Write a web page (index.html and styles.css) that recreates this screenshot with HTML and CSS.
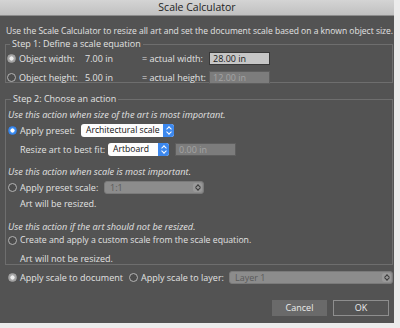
FILE: index.html
```html
<!DOCTYPE html>
<html lang="en">
<head>
    <meta charset="UTF-8">
    <title>Scale Calculator</title>
    <link rel="stylesheet" href="styles.css">
</head>
<body>
<div class="window">
    <div class="titlebar">Scale Calculator</div>
    <div class="content">
        <p class="intro">Use the Scale Calculator to resize all art and set the document scale based on a known object size.</p>

        <fieldset class="group step1">
            <legend>Step 1: Define a scale equation</legend>
            <div class="row">
                <span class="radio checked-gray"></span>
                <span class="lbl w-obj">Object width:</span>
                <span class="lbl w-val">7.00 in</span>
                <span class="lbl w-eq">= actual width:</span>
                <span class="field">28.00 in</span>
            </div>
            <div class="row">
                <span class="radio"></span>
                <span class="lbl w-obj">Object height:</span>
                <span class="lbl w-val">5.00 in</span>
                <span class="lbl w-eq">= actual height:</span>
                <span class="field disabled">12.00 in</span>
            </div>
        </fieldset>

        <fieldset class="group step2">
            <legend>Step 2: Choose an action</legend>
            <p class="hint first">Use this action when size of the art is most important.</p>
            <div class="row">
                <span class="radio checked-blue"></span>
                <span class="lbl w-preset">Apply preset:</span>
                <span class="select active w-arch">Architectural scale<span class="stepper"></span></span>
            </div>
            <div class="row indent">
                <span class="lbl w-fit">Resize art to best fit:</span>
                <span class="select active w-art">Artboard<span class="stepper"></span></span>
                <span class="field disabled w-zero">0.00 in</span>
            </div>

            <p class="hint second">Use this action when scale is most important.</p>
            <div class="row">
                <span class="radio"></span>
                <span class="lbl w-pscale">Apply preset scale:</span>
                <span class="select off w-one">1:1<span class="stepper grey"></span></span>
            </div>
            <p class="note">Art will be resized.</p>

            <p class="hint third">Use this action if the art should not be resized.</p>
            <div class="row short">
                <span class="radio"></span>
                <span class="lbl custom">Create and apply a custom scale from the scale equation.</span>
            </div>
            <p class="note last">Art will not be resized.</p>
        </fieldset>

        <div class="row apply">
            <span class="radio checked-gray"></span>
            <span class="lbl w-doc">Apply scale to document</span>
            <span class="radio"></span>
            <span class="lbl w-layer">Apply scale to layer:</span>
            <span class="select off w-layer1">Layer 1<span class="stepper grey"></span></span>
        </div>

        <div class="buttons">
            <div class="button">Cancel</div>
            <div class="button default">OK</div>
        </div>
    </div>
</div>
</body>
</html>
```

FILE: styles.css
```css
* {
    margin: 0;
    padding: 0;
    box-sizing: border-box;
}

body {
    background-color: #ececec;
    font-family: "Open Sans", "DejaVu Sans", sans-serif;
    font-size: 9px;
    color: #e2e2e2;
}

.window {
    width: 394px;
    height: 323px;
    background-color: #535353;
    overflow: hidden;
}

.titlebar {
    height: 16px;
    line-height: 15px;
    text-align: center;
    font-size: 10.5px;
    color: #1e1e1e;
    background: linear-gradient(#d4d4d4, #c0c0c0);
    border-bottom: 1px solid #8c8c8c;
}

.content {
    padding: 8px 0 0 5px;
}

.intro {
    padding-left: 1px;
    height: 13px;
    line-height: 13px;
    font-size: 8.5px;
    white-space: nowrap;
    margin-bottom: 2px;
}

.group {
    border: 1px solid #6e6e6e;
    width: 388px;
    padding: 0 0 0 1px;
}

.group legend {
    margin-left: 3px;
    padding: 0 2px;
    height: 10px;
    line-height: 10px;
}

.step1 {
    height: 44px;
}

.step2 {
    margin-top: 11px;
    height: 171px;
    padding-left: 2px;
}

.row {
    display: flex;
    align-items: center;
    height: 19px;
    white-space: nowrap;
}

.row.short {
    height: 14px;
}

.radio {
    width: 9px;
    height: 9px;
    border-radius: 50%;
    border: 1px solid #b4b4b4;
    background-color: #4c4c4c;
    margin-right: 3px;
    flex-shrink: 0;
}

.checked-gray {
    border-color: #a0a0a0;
    background: radial-gradient(circle, #eeeeee 0 1.8px, #a6a6a6 2.4px);
}

.checked-blue {
    border-color: #3482ea;
    background: radial-gradient(circle, #ffffff 0 1.8px, #3d8ef2 2.4px);
}

.lbl {
    flex-shrink: 0;
}

.custom {
    font-size: 8.7px;
}

.w-obj { width: 66px; }
.w-val { width: 57px; }
.w-eq { width: 67px; }
.w-preset { width: 61px; }
.w-fit { width: 88px; }
.w-pscale { width: 84px; }
.w-doc { width: 109px; }
.w-layer { width: 88px; }

.field {
    height: 13px;
    line-height: 11px;
    width: 61px;
    padding-left: 3px;
    background-color: #c6c6c6;
    border: 1px solid #383838;
    color: #1a1a1a;
}

.field.disabled {
    background-color: #7c7c7c;
    color: #a4a4a4;
    border-color: #5e5e5e;
}

.w-zero { margin-left: 6px; }

.select {
    position: relative;
    height: 13px;
    line-height: 13px;
    padding-left: 5px;
    border-radius: 3px;
}

.select.active {
    background-color: #fdfdfd;
    color: #111111;
    font-size: 8.6px;
}

.select.off {
    background-color: #8c8c8c;
    color: #5a5a5a;
    border: 1px solid #7a7a7a;
    line-height: 11px;
}

.stepper {
    position: absolute;
    right: 0;
    top: 0;
    bottom: 0;
    width: 11px;
    border-radius: 0 3px 3px 0;
    background-color: #3c88ee;
}

.stepper::before,
.stepper::after {
    content: "";
    position: absolute;
    left: 4px;
    width: 3px;
    height: 3px;
    border-left: 1px solid #ffffff;
    border-top: 1px solid #ffffff;
}

.stepper::before {
    top: 3px;
    transform: rotate(45deg);
}

.stepper::after {
    bottom: 3px;
    transform: rotate(225deg);
}

.stepper.grey {
    top: 1px;
    bottom: 1px;
    right: 1px;
    width: 9px;
    border-radius: 2px;
    background-color: #999999;
}

.stepper.grey::before,
.stepper.grey::after {
    left: 3px;
    border-color: #3a3a3a;
}

.stepper.grey::before { top: 2px; }
.stepper.grey::after { bottom: 2px; }

.w-arch { width: 93px; }
.w-art { width: 61px; }
.w-one { width: 100px; }
.w-layer1 { width: 164px; }

.indent {
    padding-left: 12px;
}

.hint {
    font-style: italic;
    font-size: 9.2px;
    height: 13px;
    line-height: 13px;
    white-space: nowrap;
}

.hint.first { margin-top: 4px; }
.hint.second { margin-top: 6px; }
.hint.third { margin-top: 10px; }

.note {
    padding-left: 12px;
    height: 13px;
    line-height: 13px;
}

.note.last {
    margin-top: 5px;
}

.apply {
    margin-top: 3px;
    padding-left: 3px;
}

.buttons {
    display: flex;
    justify-content: flex-end;
    gap: 6px;
    margin-top: 13px;
    padding-right: 5px;
}

.button {
    width: 55px;
    height: 16px;
    line-height: 14px;
    text-align: center;
    background-color: #6a6a6a;
    border: 1px solid #6a6a6a;
    color: #ececec;
}

.button.default {
    width: 56px;
    background-color: #555555;
    border-color: #8e8e8e;
}
```
